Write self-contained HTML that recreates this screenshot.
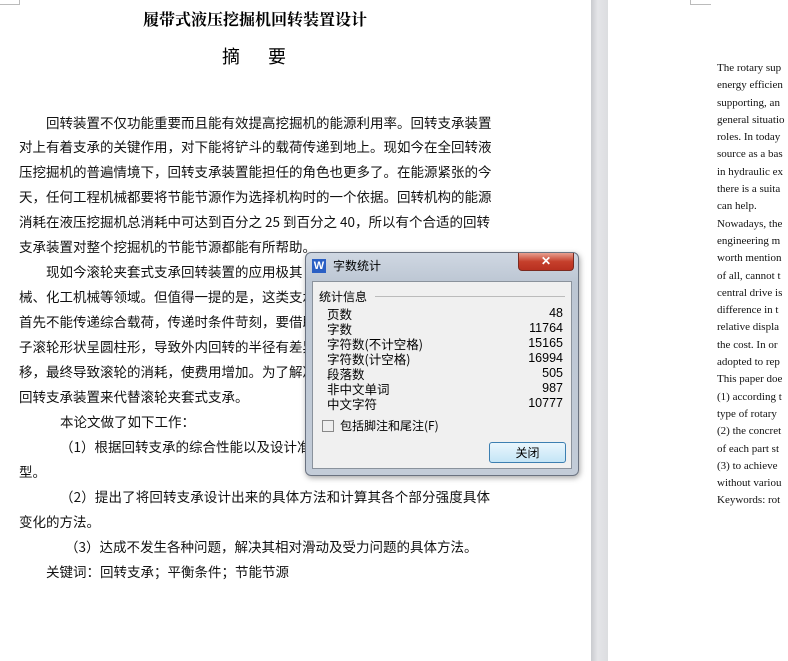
<html><head><style>
body{margin:0;width:788px;height:661px;overflow:hidden;background:#fff;position:relative;font-family:"Liberation Serif","Noto Serif CJK SC","Noto Sans CJK SC",serif}
.gut{position:absolute;left:591px;top:0;width:17px;height:661px;background:linear-gradient(90deg,#c9cbcf,#e4e5e8 40%,#dcdde0)}
.l{position:absolute;left:19px;width:471px;font-size:13.5px;height:20px;line-height:20px;text-align:justify;text-align-last:justify;white-space:nowrap;font-family:"Noto Sans CJK SC",sans-serif;color:#111}
.r{position:absolute;left:717px;font-size:11px;line-height:14px;white-space:nowrap;color:#111}
.dlg{position:absolute;left:305px;top:252px;width:272px;height:222px;background:linear-gradient(#cfd7e2,#bcc6d3 30px,#c3ccd8);border:1px solid #6a7280;border-radius:6px;box-shadow:1px 2px 6px rgba(0,0,0,.35);font-family:"Noto Sans CJK SC",sans-serif}
.in{position:absolute;left:6px;top:28px;width:258px;height:186px;background:#f0f0f0;border:1px solid #8a929c}
.row{position:absolute;left:14px;width:236px;font-size:12.5px;line-height:15px}
.row span{float:right;font-family:"Liberation Sans",sans-serif}
</style></head><body>
<div style="position:absolute;left:0;top:0;width:19px;height:4px;border-right:1px solid #bbb;border-bottom:1px solid #bbb"></div>
<div style="position:absolute;left:690px;top:0;width:20px;height:4px;border-left:1px solid #bbb;border-bottom:1px solid #bbb"></div>
<div style="position:absolute;left:0;top:7px;width:510px;text-align:center;font-size:16px;font-weight:bold;font-family:'Noto Serif CJK SC',serif">履带式液压挖掘机回转装置设计</div>
<div style="position:absolute;left:222px;top:43px;font-size:18px;font-family:'Noto Sans CJK SC',sans-serif">摘</div>
<div style="position:absolute;left:268px;top:43px;font-size:18px;font-family:'Noto Sans CJK SC',sans-serif">要</div>
<div class="l" style="top:112px;left:46px;width:444px">回转装置不仅功能重要而且能有效提高挖掘机的能源利用率。回转支承装置</div>
<div class="l" style="top:136px">对上有着支承的关键作用，对下能将铲斗的载荷传递到地上。现如今在全回转液</div>
<div class="l" style="top:161px">压挖掘机的普遍情境下，回转支承装置能担任的角色也更多了。在能源紧张的今</div>
<div class="l" style="top:186px">天，任何工程机械都要将节能节源作为选择机构时的一个依据。回转机构的能源</div>
<div class="l" style="top:211px">消耗在液压挖掘机总消耗中可达到百分之 25 到百分之 40，所以有个合适的回转</div>
<div class="l" style="top:236px;width:320px;text-align-last:left">支承装置对整个挖掘机的节能节源都能有所帮助。</div>
<div class="l" style="top:261px;left:46px;width:300px;text-align-last:left">现如今滚轮夹套式支承回转装置的应用极其</div>
<div class="l" style="top:286px;width:300px;text-align-last:left">械、化工机械等领域。但值得一提的是，这类支承</div>
<div class="l" style="top:311px;width:300px;text-align-last:left">首先不能传递综合载荷，传递时条件苛刻，要借助</div>
<div class="l" style="top:336px;width:300px;text-align-last:left">子滚轮形状呈圆柱形，导致外内回转的半径有差异</div>
<div class="l" style="top:361px;width:300px;text-align-last:left">移，最终导致滚轮的消耗，使费用增加。为了解决</div>
<div class="l" style="top:386px;width:300px;text-align-last:left">回转支承装置来代替滚轮夹套式支承。</div>
<div class="l" style="top:411px;left:60px;width:250px;text-align-last:left">本论文做了如下工作：</div>
<div class="l" style="top:436px;left:60px;width:250px;text-align-last:left">（1）根据回转支承的综合性能以及设计准</div>
<div class="l" style="top:461px;width:100px;text-align-last:left">型。</div>
<div class="l" style="top:486px;left:60px;width:430px">（2）提出了将回转支承设计出来的具体方法和计算其各个部分强度具体</div>
<div class="l" style="top:511px;width:200px;text-align-last:left">变化的方法。</div>
<div class="l" style="top:536px;left:65px;width:420px;text-align-last:left">（3）达成不发生各种问题，解决其相对滑动及受力问题的具体方法。</div>
<div class="l" style="top:561px;left:46px;width:300px;text-align-last:left">关键词：回转支承；平衡条件；节能节源</div>
<div class="gut"></div>
<div class="r" style="top:60px;line-height:17.3px">The rotary sup<br>energy efficien<br>supporting, an<br>general situatio<br>roles. In today<br>source as a bas<br>in hydraulic ex<br>there is a suita<br>can help.<br>Nowadays, the<br>engineering m<br>worth mention<br>of all, cannot t<br>central drive is<br>difference in t<br>relative displa<br>the cost. In or<br>adopted to rep<br>This paper doe<br>(1) according t<br>type of rotary<br>(2) the concret<br>of each part st<br>(3) to achieve<br>without variou<br>Keywords: rot</div>
<div class="dlg">
<div style="position:absolute;left:6px;top:6px;width:14px;height:14px;background:#2a5fc4;color:#fff;font:bold 11px 'Liberation Sans';text-align:center;line-height:14px">W</div>
<div style="position:absolute;left:27px;top:4px;font-size:12px">字数统计</div>
<div style="position:absolute;left:212px;top:0;width:54px;height:17px;background:linear-gradient(#e8a090,#c6402c 50%,#b83020);border:1px solid #7a2a20;border-top:none;border-radius:0 0 4px 4px;color:#fff;text-align:center;font:bold 12px 'Liberation Sans';line-height:16px">✕</div>
<div class="in">
<div style="position:absolute;left:6px;top:6px;font-size:12px">统计信息</div>
<div style="position:absolute;left:62px;top:14px;width:190px;border-top:1px solid #bbb"></div>
<div class="row" style="top:24px">页数<span>48</span></div>
<div class="row" style="top:39px">字数<span>11764</span></div>
<div class="row" style="top:54px">字符数(不计空格)<span>15165</span></div>
<div class="row" style="top:69px">字符数(计空格)<span>16994</span></div>
<div class="row" style="top:84px">段落数<span>505</span></div>
<div class="row" style="top:99px">非中文单词<span>987</span></div>
<div class="row" style="top:114px">中文字符<span>10777</span></div>
<div style="position:absolute;left:9px;top:138px;width:10px;height:10px;border:1px solid #888;background:#eee"></div>
<div style="position:absolute;left:27px;top:135px;font-size:12px">包括脚注和尾注(F)</div>
<div style="position:absolute;left:176px;top:160px;width:75px;height:19px;border:1px solid #3c7fb1;border-radius:3px;background:linear-gradient(#eaf6fd,#c4e5f6);text-align:center;font-size:12px;line-height:19px">关闭</div>
</div></div>
</body></html>
